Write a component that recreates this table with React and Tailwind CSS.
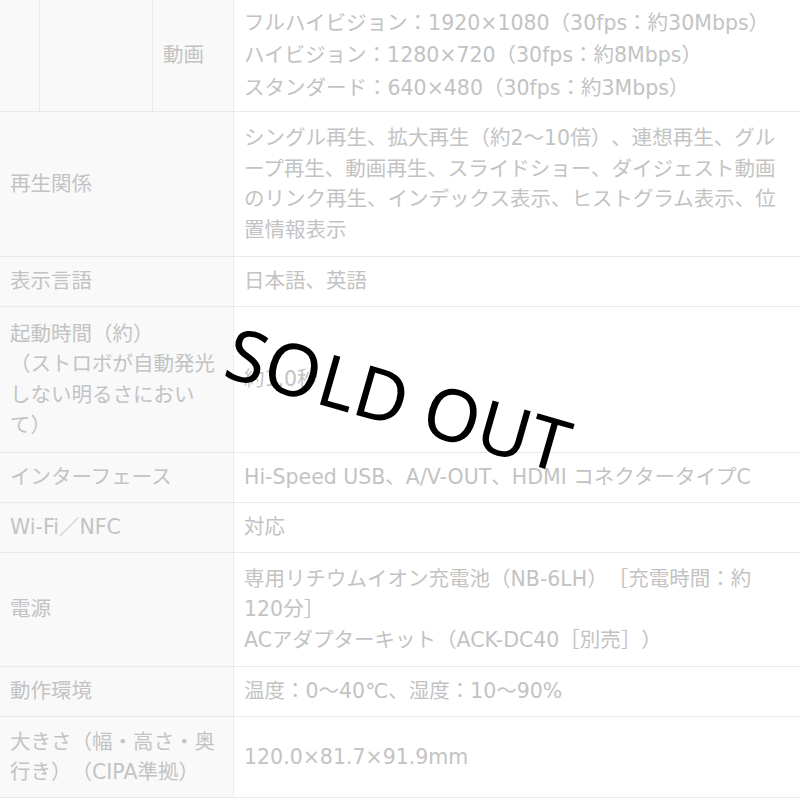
import React from "react";

const font = { fontFamily: '"DejaVu Sans", "Noto Sans CJK JP", sans-serif' };

function Row({ h, label, children, last }) {
  return (
    <div className={`flex ${last ? "" : "border-b border-[#e9e9e9]"}`} style={{ height: h }}>
      <div className="w-[234px] shrink-0 bg-[#f9f9f9] border-r border-[#ececec] flex items-center px-[10px]">
        <div className="leading-[30.5px] whitespace-nowrap">{label}</div>
      </div>
      <div className="flex-1 bg-white flex items-center px-[10px]">
        <div className="leading-[30.5px] whitespace-nowrap">{children}</div>
      </div>
    </div>
  );
}

export default function App() {
  return (
    <div className="relative w-[800px] h-[800px] overflow-hidden bg-white text-[#c3c3c3] text-[20.5px] [text-spacing-trim:space-all]" style={font}>
      <div className="flex flex-col">
        <div className="flex h-[112px] border-b border-[#e9e9e9]">
          <div className="w-[40px] shrink-0 bg-[#f9f9f9] border-r border-[#ececec]" />
          <div className="w-[113px] shrink-0 bg-[#f9f9f9] border-r border-[#ececec]" />
          <div className="w-[81px] shrink-0 bg-[#f9f9f9] border-r border-[#ececec] flex items-center px-[10px]">
            <span>動画</span>
          </div>
          <div className="flex-1 bg-white flex items-center px-[10px]">
            <div className="leading-[32.5px] whitespace-nowrap">
              フルハイビジョン：1920×1080（30fps：約30Mbps）<br />
              ハイビジョン：1280×720（30fps：約8Mbps）<br />
              スタンダード：640×480（30fps：約3Mbps）
            </div>
          </div>
        </div>
        <Row h={145} label="再生関係">
          シングル再生、拡大再生（約2～10倍）、連想再生、グル<br />
          ープ再生、動画再生、スライドショー、ダイジェスト動画<br />
          のリンク再生、インデックス表示、ヒストグラム表示、位<br />
          置情報表示
        </Row>
        <Row h={50} label="表示言語">日本語、英語</Row>
        <Row
          h={146}
          label={
            <>
              起動時間（約）<br />
              （ストロボが自動発光<br />
              しない明るさにおい<br />
              て）
            </>
          }
        >
          約1.0秒
        </Row>
        <Row h={50} label="インターフェース">Hi-Speed USB、A/V-OUT、HDMI コネクタータイプC</Row>
        <Row h={50} label="Wi-Fi／NFC">対応</Row>
        <Row h={114} label="電源">
          専用リチウムイオン充電池（NB-6LH）［充電時間：約<br />
          120分］<br />
          ACアダプターキット（ACK-DC40［別売］）
        </Row>
        <Row h={50} label="動作環境">温度：0～40℃、湿度：10～90%</Row>
        <Row
          h={81}
          label={
            <>
              大きさ（幅・高さ・奥<br />
              行き）（CIPA準拠）
            </>
          }
        >
          120.0×81.7×91.9mm
        </Row>
      </div>
      <div
        className="absolute left-[399px] top-[398px] -translate-x-1/2 -translate-y-1/2 rotate-[16deg] text-black text-[72px] leading-none whitespace-nowrap"
        style={{ fontFamily: '"Noto Sans", sans-serif' }}
      >
        SOLD OUT
      </div>
    </div>
  );
}
